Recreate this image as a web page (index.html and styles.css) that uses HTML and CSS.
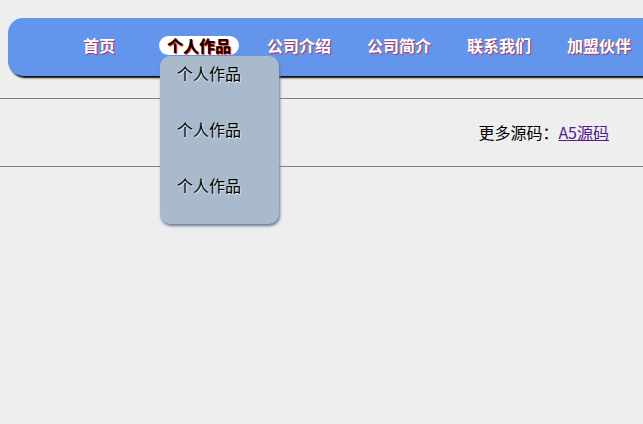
FILE: index.html
```html
<!DOCTYPE html>
<html lang="zh">
<head>
<meta charset="utf-8">
<title>导航</title>
<link rel="stylesheet" href="styles.css">
</head>
<body>
<div class="nav">
  <ul class="menu">
    <li><a href="#">首页</a></li>
    <li class="active"><a href="#">个人作品</a>
      <ul class="drop">
        <li>个人作品</li>
        <li>个人作品</li>
        <li>个人作品</li>
      </ul>
    </li>
    <li><a href="#">公司介绍</a></li>
    <li><a href="#">公司简介</a></li>
    <li><a href="#">联系我们</a></li>
    <li><a href="#">加盟伙伴</a></li>
  </ul>
</div>
<div class="bar">更多源码：<a class="src" href="#">A5源码</a></div>
</body>
</html>
```
FILE: styles.css
```css
html {
  height: 100%;
  background: #eeeeee;
}
body {
  margin: 0;
  padding: 0;
  min-height: 100%;
  background: #eeeeee;
  font-family: "Noto Sans CJK SC", "DejaVu Sans", sans-serif;
  font-size: 16px;
}
.nav {
  position: relative;
  z-index: 5;
  margin: 18px 0 0 8px;
  height: 58px;
  background: #6495ed;
  border-radius: 15px 0 0 15px;
  box-shadow: 2px 2px 2px #000;
}
.menu {
  list-style: none;
  margin: 0;
  padding: 18px 0 0 41px;
  display: flex;
}
.menu > li {
  position: relative;
  flex: 0 0 100px;
  text-align: center;
  line-height: 19px;
  height: 19px;
}
.menu > li > a {
  display: inline-block;
  vertical-align: top;
  padding: 0 8px;
  line-height: 19px;
  height: 19px;
  color: #fff;
  font-weight: bold;
  text-decoration: none;
  text-shadow: 1px 1px 1px #b03060;
  border-radius: 10px;
}
.menu > li.active > a {
  background: #fff;
  color: #000;
  text-shadow: 1px 1px 1px #e00;
}
.drop {
  list-style: none;
  margin: 0;
  padding: 0;
  position: absolute;
  z-index: 10;
  top: 20px;
  left: 11px;
  width: 119px;
  background: #a9bacd;
  border-radius: 10px;
  box-shadow: 1px 2px 3px #667799;
  text-align: left;
}
.drop li {
  height: 56px;
  box-sizing: border-box;
  padding: 8px 0 0 17px;
  line-height: 18px;
  color: #000;
  text-shadow: 1px 1px 1px #e8eef5;
}
.bar {
  margin-top: 22px;
  height: 67px;
  line-height: 67px;
  border-top: 1px solid #808080;
  border-bottom: 1px solid #808080;
  text-align: right;
  padding-right: 34px;
  color: #000;
}
.src {
  color: #551a8b;
  text-decoration: underline;
}
```
